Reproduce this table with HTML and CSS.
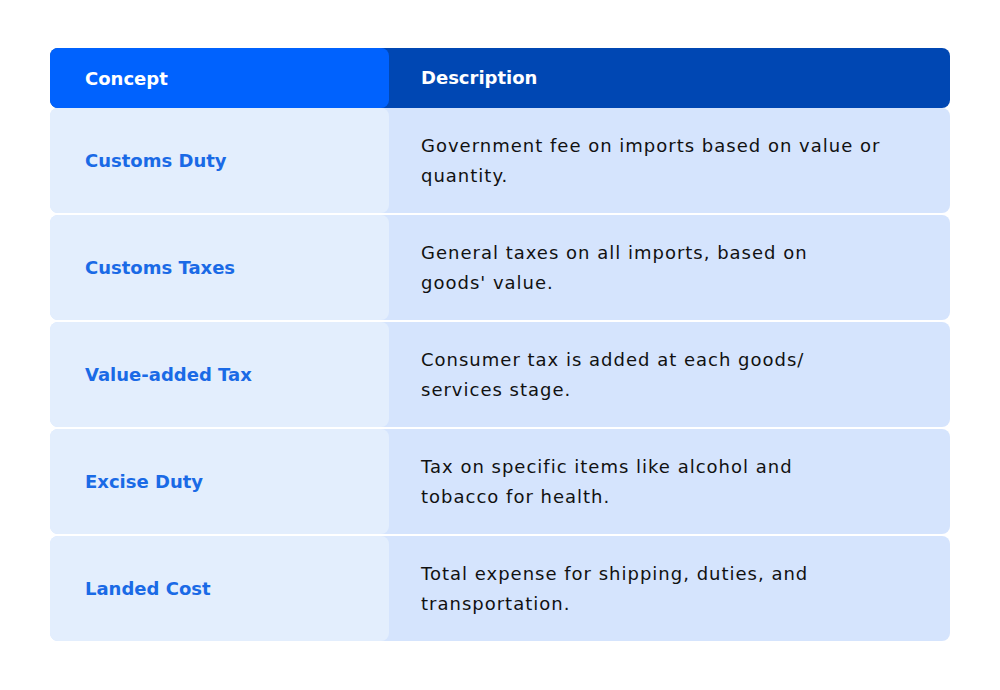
FILE: index.html
```html
<!DOCTYPE html>
<html lang="en">
<head>
<meta charset="utf-8">
<title>Import costs</title>
<link rel="stylesheet" href="styles.css">
</head>
<body>
<div class="table">
  <div class="row head">
    <div class="concept">Concept</div>
    <div class="desc">Description</div>
  </div>
  <div class="row">
    <div class="concept">Customs Duty</div>
    <div class="desc">Government fee on imports based on value or<br>quantity.</div>
  </div>
  <div class="row">
    <div class="concept">Customs Taxes</div>
    <div class="desc">General taxes on all imports, based on<br>goods' value.</div>
  </div>
  <div class="row">
    <div class="concept">Value-added Tax</div>
    <div class="desc">Consumer tax is added at each goods/<br>services stage.</div>
  </div>
  <div class="row">
    <div class="concept">Excise Duty</div>
    <div class="desc">Tax on specific items like alcohol and<br>tobacco for health.</div>
  </div>
  <div class="row">
    <div class="concept">Landed Cost</div>
    <div class="desc">Total expense for shipping, duties, and<br>transportation.</div>
  </div>
</div>
</body>
</html>
```

FILE: styles.css
```css
html, body {
  margin: 0;
  padding: 0;
  background: #ffffff;
}
body {
  font-family: "DejaVu Sans", "Liberation Sans", sans-serif;
}
.table {
  width: 900px;
  margin: 48px 0 0 50px;
  display: flex;
  flex-direction: column;
  gap: 2px;
}
.row {
  display: grid;
  grid-template-columns: 339px 1fr;
  height: 105px;
  background: #d5e4fd;
  border-radius: 8px;
}
.row.head {
  height: 60px;
  background: #0047b3;
  margin-bottom: -2px;
}
.concept {
  display: flex;
  align-items: center;
  padding-left: 35px;
  background: #e3eefd;
  border-radius: 8px;
  color: #1a6ae6;
  font-size: 18px;
  font-weight: 600;
}
.desc {
  display: flex;
  align-items: center;
  padding-left: 32px;
  color: #111111;
  font-size: 18px;
  line-height: 30px;
  letter-spacing: 1px;
}
.head .concept {
  background: #0062fe;
  color: #ffffff;
}
.head .desc {
  color: #ffffff;
  font-weight: 600;
  letter-spacing: 0;
}
```
